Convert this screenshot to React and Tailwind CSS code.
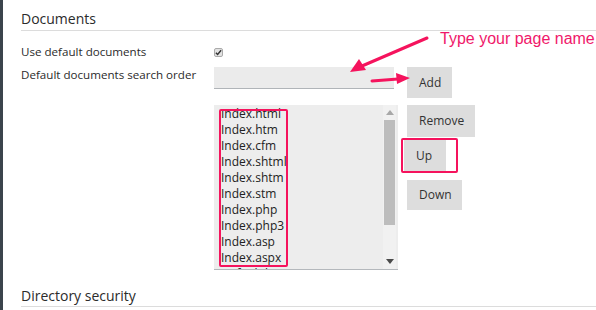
const items = [
  'Index.html',
  'Index.htm',
  'Index.cfm',
  'Index.shtml',
  'Index.shtm',
  'Index.stm',
  'Index.php',
  'Index.php3',
  'Index.asp',
  'Index.aspx',
  'Default.htm',
];

const Btn = ({ children, className = '' }) => (
  <button className={`bg-[#dddddd] text-[12px] text-[#333] px-[12px] text-left ${className}`}>
    {children}
  </button>
);

export default function App() {
  return (
    <div
      className="relative flex w-[596px] h-[310px] overflow-hidden bg-white text-[#2b2b2b]"
      style={{ fontFamily: '"Open Sans", "DejaVu Sans", sans-serif' }}
    >
      <div className="w-[3px] shrink-0 bg-[#3b444c]" />
      <div className="flex-1 pl-[18px]">
        <div className="pt-[9px] h-[31px] border-b border-[#dcdcdc] text-[14px] leading-[20px]">Documents</div>

        <div className="flex items-center mt-[13px] h-[16px]">
          <span className="w-[193px] text-[11.6px]">Use default documents</span>
          <span className="w-[9px] h-[9px] rounded-[2px] bg-[#e2e2e2] border border-[#aaa] flex items-center justify-center">
            <svg width="7" height="7" viewBox="0 0 8 8">
              <path d="M1 4.2 L3 6.3 L7 1.5" fill="none" stroke="#333" strokeWidth="1.6" />
            </svg>
          </span>
        </div>

        <div className="flex mt-[7px]">
          <span className="w-[193px] text-[11.6px] leading-[16px]">Default documents search order</span>
          <div className="w-[180px] h-[22px] bg-[#ebebeb] border-b border-[#b0b4b8]" />
          <Btn className="ml-[13px] h-[31px] w-[45px]">Add</Btn>
        </div>

        <div className="flex mt-[7px]">
          <div className="ml-[193px] relative w-[184px] h-[165px] bg-[#ededed] border-b border-[#b4b8bc] flex overflow-hidden">
            <div className="flex-1 pl-[7px] pt-[1px] text-[12px] leading-[16px] text-[#222]">
              {items.map((i) => (
                <div key={i}>{i}</div>
              ))}
            </div>
            <div className="w-[13px] mr-[2px] bg-[#f1f1f1] flex flex-col items-center">
              <svg width="8" height="5" viewBox="0 0 8 5" className="mt-[5px]">
                <path d="M0 5 L4 0 L8 5 Z" fill="#a8a8a8" />
              </svg>
              <div className="w-[11px] h-[105px] mt-[5px] bg-[#bdbdbd]" />
              <div className="flex-1" />
              <svg width="8" height="5" viewBox="0 0 8 5" className="mb-[5px]">
                <path d="M0 0 L8 0 L4 5 Z" fill="#4a4a4a" />
              </svg>
            </div>
            <div className="absolute left-[5px] top-[4px] w-[69px] h-[158px] border-[2.5px] border-[#f5135d] rounded-[2px]" />
          </div>
          <div className="ml-[9px] flex flex-col items-start">
            <Btn className="h-[32px] w-[68px]">Remove</Btn>
            <div className="mt-[1px] -ml-[6px] border-[2.5px] border-[#f5135d] rounded-[2px] pl-[1px] pr-[10px]">
              <Btn className="h-[31px] w-[42px]">Up</Btn>
            </div>
            <Btn className="mt-[7px] h-[30px] w-[55px]">Down</Btn>
          </div>
        </div>

        <div className="mt-[16px] h-[21px] border-b border-[#dcdcdc] text-[14px] leading-[20px]">Directory security</div>
      </div>

      <div
        className="absolute left-[440px] top-[29px] text-[16px] leading-[20px] text-[#f0186a]"
        style={{ fontFamily: '"Liberation Sans", Arial, sans-serif' }}
      >
        Type your page name
      </div>
      <svg className="absolute left-0 top-0 pointer-events-none" width="596" height="310">
        <line x1="427" y1="38" x2="362" y2="66" stroke="#f5135d" strokeWidth="3" strokeLinecap="round" />
        <path d="M350 72 L359 59 L366 70 Z" fill="#f5135d" />
        <line x1="372" y1="81" x2="398" y2="79" stroke="#f5135d" strokeWidth="3" strokeLinecap="round" />
        <path d="M410 78 L396 73 L397 84 Z" fill="#f5135d" />
      </svg>
    </div>
  );
}
